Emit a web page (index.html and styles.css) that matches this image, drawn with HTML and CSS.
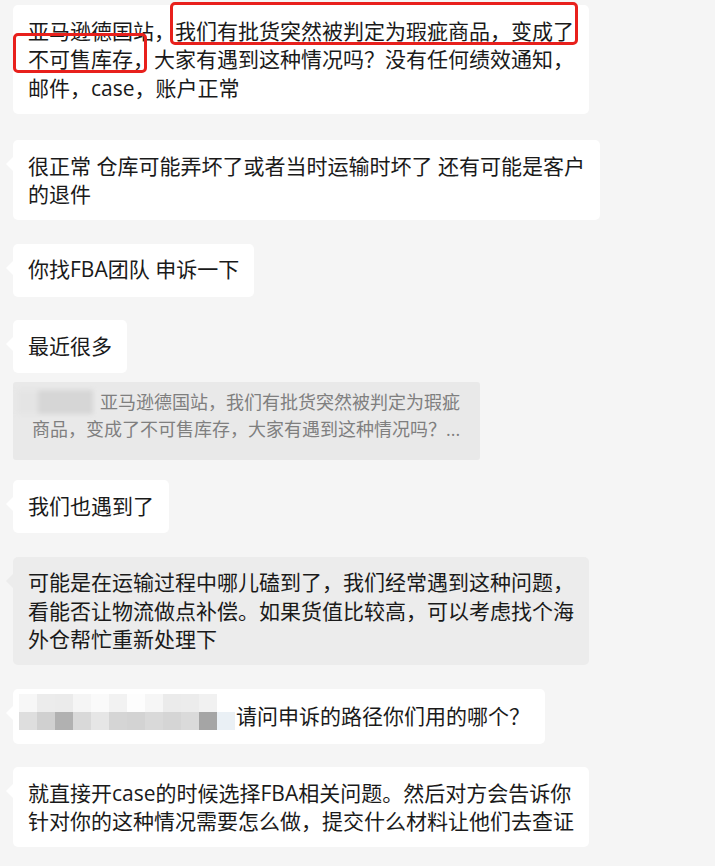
FILE: index.html
```html
<!DOCTYPE html>
<html lang="zh-CN">
<head>
  <meta charset="UTF-8">
  <title>聊天记录</title>
  <link rel="stylesheet" href="styles.css">
</head>
<body>

<div class="chat">

  <div class="msg first">
    <div class="bubble no-tail">
      亚马逊德国站，我们有批货突然被判定为瑕疵商品，变成了<br>
      不可售库存，大家有遇到这种情况吗？没有任何绩效通知，<br>
      邮件，case，账户正常
      <span class="mark mark-one"></span>
      <span class="mark mark-two"></span>
    </div>
  </div>

  <div class="msg">
    <div class="bubble">
      很正常 仓库可能弄坏了或者当时运输时坏了 还有可能是客户<br>
      的退件
    </div>
  </div>

  <div class="msg">
    <div class="bubble">你找FBA团队 申诉一下</div>
  </div>

  <div class="msg">
    <div class="bubble">最近很多</div>
  </div>

  <div class="msg quote-row">
    <div class="quote">
      <span class="quote-name"></span>亚马逊德国站，我们有批货突然被判定为瑕疵<br>
      商品，变成了不可售库存，大家有遇到这种情况吗？...
    </div>
  </div>

  <div class="msg after-quote">
    <div class="bubble">我们也遇到了</div>
  </div>

  <div class="msg">
    <div class="bubble selected">
      可能是在运输过程中哪儿磕到了，我们经常遇到这种问题，<br>
      看能否让物流做点补偿。如果货值比较高，可以考虑找个海<br>
      外仓帮忙重新处理下
    </div>
  </div>

  <div class="msg">
    <div class="bubble with-name">
      <span class="mosaic">
        <i style="background:#f7f7f7"></i><i style="background:#ececec"></i><i style="background:#ebebeb"></i><i style="background:#f5f5f5"></i><i style="background:#fafafa"></i><i style="background:#f2f2f2"></i><i style="background:#fdfdfd"></i><i style="background:#f6f6f6"></i><i style="background:#ebebeb"></i><i style="background:#ececec"></i><i style="background:#f1f1f1"></i><i style="background:#ffffff"></i>
        <i style="background:#dedede"></i><i style="background:#d0d0d0"></i><i style="background:#b1b1b1"></i><i style="background:#d9d9d9"></i><i style="background:#e6e6e6"></i><i style="background:#d5d5d5"></i><i style="background:#d3d3d3"></i><i style="background:#d9d9d9"></i><i style="background:#d5d5d5"></i><i style="background:#dadada"></i><i style="background:#a5a5a5"></i><i style="background:#eaf0f5"></i>
      </span>
      <span>请问申诉的路径你们用的哪个？</span>
    </div>
  </div>

  <div class="msg">
    <div class="bubble">
      就直接开case的时候选择FBA相关问题。然后对方会告诉你<br>
      针对你的这种情况需要怎么做，提交什么材料让他们去查证
    </div>
  </div>

</div>

</body>
</html>
```

FILE: styles.css
```css
body {
  margin: 0;
  padding: 0;
  background: #f5f5f5;
  font-family: "Open Sans", "Noto Sans CJK SC", sans-serif;
  color: #1a1a1a;
}

.chat {
  display: flex;
  flex-direction: column;
  align-items: flex-start;
  padding: 5px 0 0 13px;
}

.msg {
  margin-top: 23.5px;
}

.msg.first {
  margin-top: 0;
}

.msg.first + .msg {
  margin-top: 26.5px;
}

.bubble {
  position: relative;
  box-sizing: border-box;
  min-height: 53px;
  background: #fff;
  border-radius: 5px;
  padding: 11.5px 15px;
  font-size: 21px;
  line-height: 28.5px;
  white-space: nowrap;
}

.bubble::before {
  content: "";
  position: absolute;
  left: -7px;
  top: 17px;
  border-top: 7px solid transparent;
  border-bottom: 7px solid transparent;
  border-right: 7px solid #fff;
}

.bubble.no-tail::before {
  display: none;
}

.bubble.selected {
  background: #ececec;
}

.bubble.selected::before {
  border-right-color: #ececec;
}

/* red annotation boxes drawn over the first message */
.mark {
  position: absolute;
  border: 3px solid #e8201c;
  border-radius: 5px;
  box-sizing: border-box;
}

.mark-one {
  left: 157px;
  top: -3px;
  width: 408px;
  height: 43px;
}

.mark-two {
  left: 0;
  top: 28px;
  width: 134px;
  height: 40px;
}

.quote-row {
  margin-top: 9px;
}

.after-quote {
  margin-top: 20px;
}

.quote {
  background: #e9e9e9;
  border-radius: 3px;
  padding: 7px 20px 17px 19px;
  font-size: 18px;
  line-height: 27px;
  color: #7f7f7f;
  white-space: nowrap;
}

.quote-name {
  display: inline-block;
  vertical-align: -5px;
  width: 76px;
  height: 24px;
  margin-left: -15px;
  margin-right: 7px;
  background: linear-gradient(to right, #e4e4e4 0, #e4e4e4 20px, #d6d6d6 22px, #d6d6d6 100%);
  filter: blur(2px);
}

.bubble.with-name {
  display: flex;
  align-items: flex-end;
  padding: 5px 15px 13px 6px;
}

.mosaic {
  display: grid;
  grid-template-columns: repeat(12, 18px);
  grid-template-rows: repeat(2, 18px);
  margin-right: 1px;
  margin-bottom: 1px;
}

.mosaic i {
  display: block;
}
```
